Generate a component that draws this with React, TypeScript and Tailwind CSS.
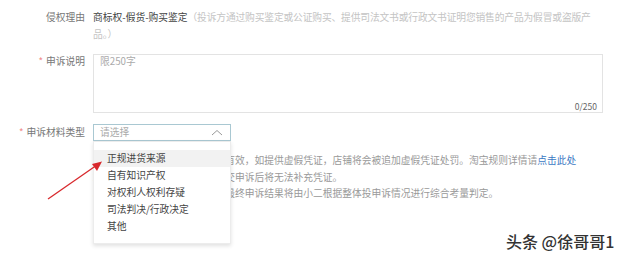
import React from "react";

const font = { fontFamily: '"Noto Sans CJK SC", "Noto Sans", sans-serif' };

export default function App() {
  const items = ["正规进货来源", "自有知识产权", "对权利人权利存疑", "司法判决/行政决定", "其他"];
  return (
    <div
      className="relative w-[623px] h-[260px] overflow-hidden bg-white text-[9.75px] text-[#555]"
      style={font}
    >
      {/* row 1 */}
      <div className="flex pt-[9px] leading-[17px]">
        <div className="w-[86px] shrink-0 pr-[1px] text-right text-[#777]">侵权理由</div>
        <div className="ml-[7px] whitespace-nowrap">
          <div>
            <span className="text-[#444]">商标权-假货-购买鉴定</span>
            <span className="tracking-[-0.15px] text-[#c4c4c4]">（投诉方通过购买鉴定或公证购买、提供司法文书或行政文书证明您销售的产品为假冒或盗版产</span>
          </div>
          <div className="text-[#c4c4c4]">品。）</div>
        </div>
      </div>

      {/* row 2 */}
      <div className="mt-[11px] flex">
        <div className="w-[86px] shrink-0 pr-[1px] pt-[1px] text-right leading-[12px] text-[#777]">
          <span className="mr-[3px] text-[#f08a8a]">*</span>申诉说明
        </div>
        <div className="ml-[7px] flex h-[59px] w-[510px] flex-col justify-between border border-[#e3e3e3] pl-[6px] pr-[5px] pb-[1px]">
          <div className="leading-[12px] text-[#aaa]">限250字</div>
          <div className="self-end text-[8.5px] leading-[10px] text-[#666]">0/250</div>
        </div>
      </div>

      {/* row 3 */}
      <div className="mt-[11px] flex">
        <div className="w-[86px] shrink-0 pr-[1px] pt-[2px] text-right leading-[13px] text-[#777]">
          <span className="mr-[3px] text-[#f08a8a]">*</span>申诉材料类型
        </div>
        <div className="ml-[7px] flex flex-col">
          <div className="relative flex h-[17px] w-[138px] items-center justify-between border border-[#a9c8d2] pl-[6px] pr-[6px]">
            <span className="leading-[13px] text-[#aaa]">请选择</span>
            <svg width="12" height="7" viewBox="0 0 12 7" className="mr-[1px]">
              <polyline points="1,6 6,1.5 11,6" fill="none" stroke="#999" strokeWidth="1" />
            </svg>
            <div className="absolute left-[-1px] top-[16px] z-10 w-[138px] border border-[#ececec] bg-white pt-[8px] pb-[8px] shadow-[0_2px_4px_rgba(0,0,0,0.12)]">
              {items.map((t, i) => (
                <div
                  key={t}
                  className={`h-[17px] pl-[13px] leading-[17px] text-[#444] ${i === 0 ? "bg-[#f2f2f2]" : ""}`}
                >
                  {t}
                </div>
              ))}
            </div>
          </div>
          <div className="mt-[11px] whitespace-nowrap leading-[16.5px] text-[#999]">
            <div>
              1、请确保您所提交的凭证真实有效，如提供虚假凭证，店铺将会被追加虚假凭证处罚。淘宝规则详情请
              <span className="text-[#3a78c3]">点击此处</span>
            </div>
            <div>2、请一次性上传所有凭证，提交申诉后将无法补充凭证。</div>
            <div>3、申诉凭证及说明仅供参考，最终申诉结果将由小二根据整体投申诉情况进行综合考量判定。</div>
          </div>
        </div>
      </div>

      {/* red arrow annotation */}
      <svg className="absolute left-0 top-0 z-20" width="623" height="260" viewBox="0 0 623 260">
        <line x1="48" y1="199" x2="97" y2="165" stroke="#d8282c" strokeWidth="1.3" />
        <polygon points="102,161.5 92,164 97,171" fill="#d8282c" />
      </svg>

      {/* watermark */}
      <div
        className="absolute left-[506px] top-[231px] z-20 text-[16px] leading-[20px] font-medium text-[#333] [text-shadow:0_0_2px_#fff,0_0_2px_#fff]"
        style={font}
      >
        头条 @徐哥哥1
      </div>
    </div>
  );
}
